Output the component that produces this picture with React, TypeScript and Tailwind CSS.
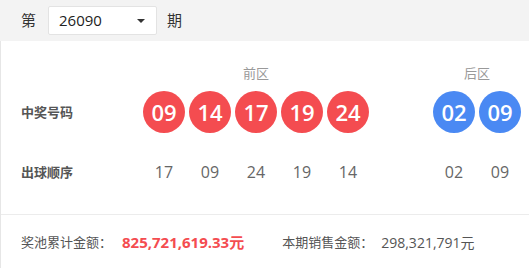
import React from 'react';

const front = ['09', '14', '17', '19', '24'];
const back = ['02', '09'];
const frontOrder = ['17', '09', '24', '19', '14'];
const backOrder = ['02', '09'];

const cjk = { fontFamily: '"Noto Sans CJK SC", "Open Sans", sans-serif' };
const num = { fontFamily: '"Open Sans", "Noto Sans CJK SC", sans-serif' };

function Ball({ n, blue }: { n: string; blue?: boolean }) {
  return (
    <div
      className={`w-[42px] h-[42px] rounded-full flex items-center justify-center text-white text-[22px] font-semibold ${
        blue ? 'bg-[#4a89f3]' : 'bg-[#f44c50]'
      }`}
      style={num}
    >
      {n}
    </div>
  );
}

export default function App() {
  return (
    <div className="w-[529px] h-[268px] bg-white overflow-hidden" style={cjk}>
      <header className="h-[41px] bg-[#f3f3f3] flex items-center">
        <span className="ml-[21px] text-[15px] text-[#333]">第</span>
        <div className="ml-[12px] w-[109px] h-[29px] bg-white border border-[#e3e3e3] rounded-[2px] flex items-center justify-between pl-[10px] pr-[11px]">
          <span className="text-[15px] text-[#222]" style={num}>26090</span>
          <span className="w-0 h-0 border-l-[4px] border-r-[4px] border-t-[4px] border-l-transparent border-r-transparent border-t-[#333]" />
        </div>
        <span className="ml-[10px] text-[15px] text-[#333]">期</span>
      </header>

      <div className="border-l border-[#e6e6e6] h-[227px]">
        <div className="flex pt-[24px] h-[40px] text-[13px] leading-[16px] text-[#999]">
          <div className="w-[142px]" />
          <div className="w-[226px] text-center">前区</div>
          <div className="w-[64px]" />
          <div className="w-[88px] text-center">后区</div>
        </div>

        <div className="flex items-center mt-[10px] h-[42px]">
          <div className="w-[142px] pl-[20px] text-[13px] font-bold text-[#555]">中奖号码</div>
          <div className="flex gap-[4px]">
            {front.map((n, i) => (
              <Ball key={i} n={n} />
            ))}
          </div>
          <div className="w-[64px]" />
          <div className="flex gap-[4px]">
            {back.map((n, i) => (
              <Ball key={i} n={n} blue />
            ))}
          </div>
        </div>

        <div className="flex items-center mt-[29px] h-[20px]">
          <div className="w-[142px] pl-[20px] text-[13px] font-bold text-[#555]">出球顺序</div>
          <div className="flex gap-[4px]">
            {frontOrder.map((n, i) => (
              <div key={i} className="w-[42px] text-center text-[16px] text-[#666]" style={num}>
                {n}
              </div>
            ))}
          </div>
          <div className="w-[64px]" />
          <div className="flex gap-[4px]">
            {backOrder.map((n, i) => (
              <div key={i} className="w-[42px] text-center text-[16px] text-[#666]" style={num}>
                {n}
              </div>
            ))}
          </div>
        </div>

        <div className="mt-[32px] border-b border-[#ececec]" />

        <div className="flex items-center h-[54px] pl-[20px] text-[13px] text-[#555]">
          <span>奖池累计金额：</span>
          <span className="ml-[10px] text-[15px] font-bold text-[#f44c50]" style={num}>
            825,721,619.33<span style={cjk}>元</span>
          </span>
          <span className="ml-[38px]">本期销售金额：</span>
          <span className="ml-[8px] text-[14px]" style={num}>
            298,321,791<span style={cjk}>元</span>
          </span>
        </div>
      </div>
    </div>
  );
}
